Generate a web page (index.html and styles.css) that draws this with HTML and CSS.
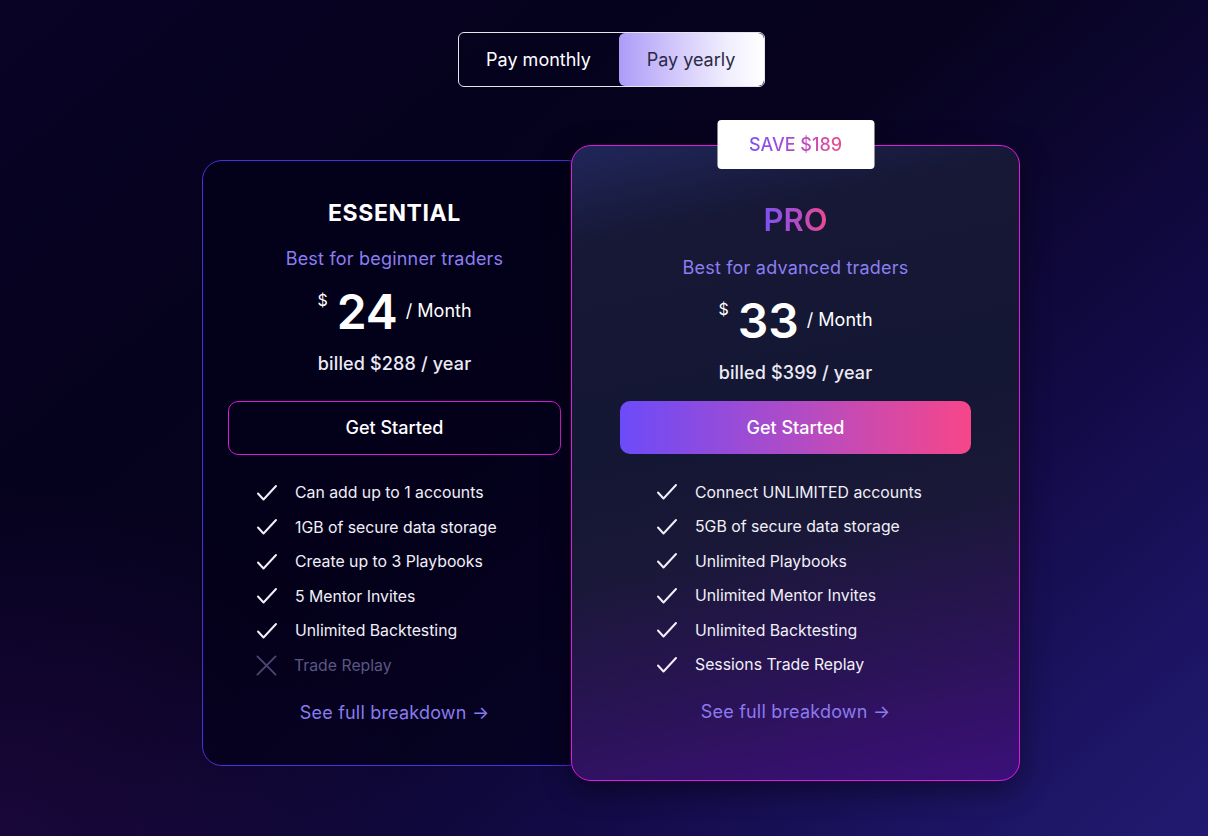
FILE: index.html
```html
<!DOCTYPE html>
<html lang="en">
<head>
<meta charset="utf-8">
<title>Pricing</title>
<link rel="stylesheet" href="styles.css">
</head>
<body>
<main class="page">
  <div class="toggle">
    <button class="toggle-opt">Pay monthly</button>
    <button class="toggle-opt active">Pay yearly</button>
  </div>

  <div class="plans">
    <section class="card essential">
      <h2 class="plan-name">ESSENTIAL</h2>
      <p class="plan-sub">Best for beginner traders</p>
      <div class="price"><span class="cur">$</span><span class="amt">24</span><span class="per">/ Month</span></div>
      <p class="billed">billed $288 / year</p>
      <button class="cta outline">Get Started</button>
      <ul class="features">
        <li><svg class="ico" viewBox="0 0 22 18"><path d="M2 9.5 L7.5 15.5 L20 2" fill="none" stroke="#f2f0fa" stroke-width="2" stroke-linecap="round" stroke-linejoin="round"/></svg>Can add up to 1 accounts</li>
        <li><svg class="ico" viewBox="0 0 22 18"><path d="M2 9.5 L7.5 15.5 L20 2" fill="none" stroke="#f2f0fa" stroke-width="2" stroke-linecap="round" stroke-linejoin="round"/></svg>1GB of secure data storage</li>
        <li><svg class="ico" viewBox="0 0 22 18"><path d="M2 9.5 L7.5 15.5 L20 2" fill="none" stroke="#f2f0fa" stroke-width="2" stroke-linecap="round" stroke-linejoin="round"/></svg>Create up to 3 Playbooks</li>
        <li><svg class="ico" viewBox="0 0 22 18"><path d="M2 9.5 L7.5 15.5 L20 2" fill="none" stroke="#f2f0fa" stroke-width="2" stroke-linecap="round" stroke-linejoin="round"/></svg>5 Mentor Invites</li>
        <li><svg class="ico" viewBox="0 0 22 18"><path d="M2 9.5 L7.5 15.5 L20 2" fill="none" stroke="#f2f0fa" stroke-width="2" stroke-linecap="round" stroke-linejoin="round"/></svg>Unlimited Backtesting</li>
        <li class="off"><svg class="ico x" viewBox="0 0 22 22"><path d="M1.5 1.5 L20.5 20.5 M20.5 1.5 L1.5 20.5" fill="none" stroke="#4a4670" stroke-width="2" stroke-linecap="round"/></svg>Trade Replay</li>
      </ul>
      <a class="breakdown" href="#">See full breakdown →</a>
    </section>

    <section class="card pro">
      <div class="badge"><span class="grad-text">SAVE $189</span></div>
      <h2 class="plan-name pro-name"><span class="grad-text">PRO</span></h2>
      <p class="plan-sub">Best for advanced traders</p>
      <div class="price"><span class="cur">$</span><span class="amt">33</span><span class="per">/ Month</span></div>
      <p class="billed">billed $399 / year</p>
      <button class="cta filled">Get Started</button>
      <ul class="features">
        <li><svg class="ico" viewBox="0 0 22 18"><path d="M2 9.5 L7.5 15.5 L20 2" fill="none" stroke="#f2f0fa" stroke-width="2" stroke-linecap="round" stroke-linejoin="round"/></svg>Connect UNLIMITED accounts</li>
        <li><svg class="ico" viewBox="0 0 22 18"><path d="M2 9.5 L7.5 15.5 L20 2" fill="none" stroke="#f2f0fa" stroke-width="2" stroke-linecap="round" stroke-linejoin="round"/></svg>5GB of secure data storage</li>
        <li><svg class="ico" viewBox="0 0 22 18"><path d="M2 9.5 L7.5 15.5 L20 2" fill="none" stroke="#f2f0fa" stroke-width="2" stroke-linecap="round" stroke-linejoin="round"/></svg>Unlimited Playbooks</li>
        <li><svg class="ico" viewBox="0 0 22 18"><path d="M2 9.5 L7.5 15.5 L20 2" fill="none" stroke="#f2f0fa" stroke-width="2" stroke-linecap="round" stroke-linejoin="round"/></svg>Unlimited Mentor Invites</li>
        <li><svg class="ico" viewBox="0 0 22 18"><path d="M2 9.5 L7.5 15.5 L20 2" fill="none" stroke="#f2f0fa" stroke-width="2" stroke-linecap="round" stroke-linejoin="round"/></svg>Unlimited Backtesting</li>
        <li><svg class="ico" viewBox="0 0 22 18"><path d="M2 9.5 L7.5 15.5 L20 2" fill="none" stroke="#f2f0fa" stroke-width="2" stroke-linecap="round" stroke-linejoin="round"/></svg>Sessions Trade Replay</li>
      </ul>
      <a class="breakdown" href="#">See full breakdown →</a>
    </section>
  </div>
</main>
</body>
</html>
```

FILE: styles.css
```css
* { box-sizing: border-box; }
html, body { margin: 0; padding: 0; }
body {
  width: 1208px;
  height: 836px;
  overflow: hidden;
  font-family: Inter, "Noto Sans", sans-serif;
  color: #fff;
  background:
    radial-gradient(ellipse 600px 500px at 0% 100%, rgba(40, 10, 80, 0.55), rgba(40, 10, 80, 0) 70%),
    linear-gradient(140deg, #090326 0%, #05021d 28%, #07031f 45%, #120a45 70%, #1c1462 88%, #221a70 100%);
}
.page {
  display: flex;
  flex-direction: column;
  align-items: center;
  padding-top: 32px;
  padding-left: 14px;
}

/* toggle */
.toggle {
  display: flex;
  height: 55px;
  border: 1px solid #e6e4ef;
  border-radius: 6px;
  overflow: hidden;
}
.toggle-opt {
  font-family: Inter, sans-serif;
  font-size: 18px;
  font-weight: 400;
  border: 0;
  background: transparent;
  color: #fff;
  padding: 0;
  width: 160px;
  cursor: pointer;
}
.toggle-opt.active {
  width: 145px;
  color: #2b2a45;
  border-radius: 6px;
  background: linear-gradient(90deg, #ad9cf8 0%, #d3c9fb 40%, #f1eefe 75%, #ffffff 100%);
}

/* plans */
.plans {
  display: flex;
  align-items: center;
  margin-top: 58px;
}
.card {
  display: flex;
  flex-direction: column;
  align-items: center;
  border-radius: 20px;
  position: relative;
}
.essential {
  width: 385px;
  padding: 39px 25px 41px;
  border: 1px solid #4a2ee0;
  background: rgba(3, 0, 24, 0.7);
}
.pro {
  width: 449px;
  margin-left: -16px;
  padding: 56px 48px 57px;
  border: 1px solid #e418e0;
  background: linear-gradient(168deg, #20265a 0%, #161836 14%, #141733 45%, #1a1838 60%, #2a1356 80%, #3c0f7a 100%);
  box-shadow: 0 8px 30px rgba(0, 0, 0, 0.45);
  z-index: 1;
}

.badge {
  position: absolute;
  top: -26px;
  left: 50%;
  transform: translateX(-50%);
  width: 157px;
  height: 49px;
  background: #fff;
  border-radius: 4px;
  display: flex;
  align-items: center;
  justify-content: center;
  font-size: 18px;
  font-weight: 500;
}
.grad-text {
  background: linear-gradient(90deg, #7a52f6 0%, #b64cc4 55%, #ee4a8c 100%);
  -webkit-background-clip: text;
  background-clip: text;
  color: transparent;
}

.plan-name {
  margin: 0;
  font-family: Inter, sans-serif;
  font-weight: 700;
  font-size: 23px;
  letter-spacing: 0.6px;
  line-height: 27px;
  color: #fff;
}
.pro-name {
  font-size: 31px;
  font-weight: 600;
  letter-spacing: 0;
  line-height: 36px;
}
.plan-sub {
  margin: 21px 0 0;
  font-size: 18px;
  letter-spacing: 0.2px;
  line-height: 22px;
  color: #8c7ef2;
}
.pro .plan-sub { margin-top: 19px; }

.price {
  display: flex;
  align-items: center;
  margin-top: 14px;
  height: 56px;
}
.cur {
  align-self: flex-start;
  font-size: 16px;
  line-height: 20px;
  margin-top: 6px;
  margin-right: 9px;
}
.amt {
  font-size: 48px;
  font-weight: 600;
  line-height: 56px;
  margin-right: 8px;
}
.per {
  font-size: 18px;
  line-height: 22px;
  margin-top: -2px;
}
.billed {
  margin: 13px 0 0;
  font-size: 18px;
  letter-spacing: 0.15px;
  line-height: 22px;
  font-weight: 500;
  color: #ecebf5;
}
.pro .billed { margin-top: 13px; }

.cta {
  margin-top: 26px;
  width: 100%;
  height: 54px;
  border-radius: 10px;
  font-family: Inter, sans-serif;
  font-size: 18px;
  font-weight: 500;
  color: #fff;
  cursor: pointer;
}
.cta.outline {
  background: transparent;
  border: 1px solid #d81ad6;
}
.cta.filled {
  margin-top: 17px;
  height: 53px;
  border: 0;
  background: linear-gradient(90deg, #6c4bf9 0%, #b04cc6 50%, #f74689 100%);
}

.features {
  list-style: none;
  margin: 28px 0 0;
  padding: 0 0 0 28px;
  align-self: stretch;
  display: flex;
  flex-direction: column;
  gap: 14.5px;
}
.pro .features { padding-left: 36px; }
.features li {
  display: flex;
  align-items: center;
  height: 20px;
  font-size: 15.8px;
  color: #f1f0f8;
}
.features li.off { color: #5a5780; }
.ico {
  width: 22px;
  height: 18px;
  flex: none;
  margin-right: 17px;
}
.ico.x {
  width: 21px;
  height: 21px;
}

.breakdown {
  margin-top: 27px;
  font-size: 18px;
  letter-spacing: 0.2px;
  line-height: 22px;
  color: #8a7bef;
  text-decoration: none;
}
.pro .breakdown { margin-top: 26px; }
```
